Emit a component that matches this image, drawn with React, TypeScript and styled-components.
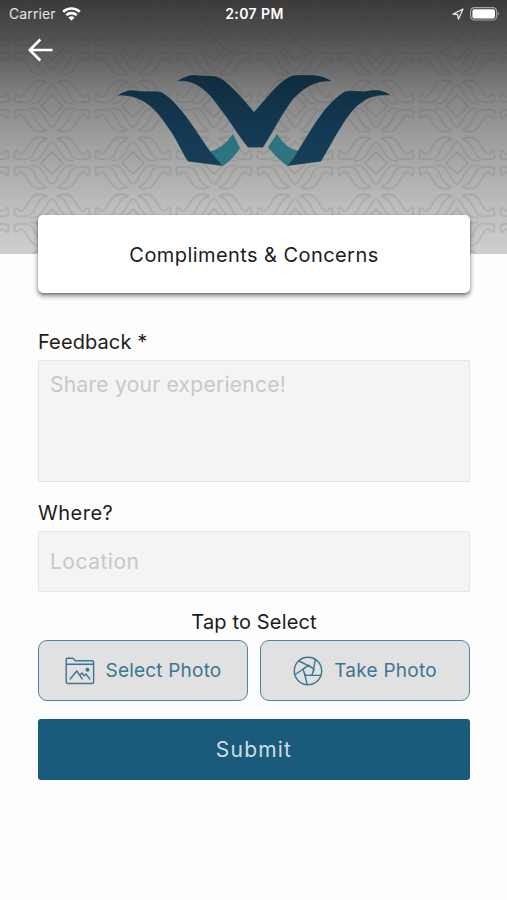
import React from 'react';
import styled, { createGlobalStyle } from 'styled-components';

const GlobalStyle = createGlobalStyle`
  * { box-sizing: border-box; }
  body { margin: 0; background: #fdfdfd; }
  button, input, textarea { font: inherit; }
`;

const Screen = styled.main`
  display: flex;
  flex-direction: column;
  width: 100%;
  height: 900px;
  overflow: hidden;
  background: #fdfdfd;
  color: #1b1b1b;
  font-family: Inter, 'Liberation Sans', sans-serif;
`;

const Header = styled.header`
  position: relative;
  flex: none;
  height: 254px;
  background: linear-gradient(#3b3b3b 0, #4b4b4b 28px, #626262 60px, #858585 98px, #9c9c9c 135px, #acacab 170px, #bfbfbe 210px, #cfcfce 254px);
`;

const HeaderArt = styled.svg`
  position: absolute;
  inset: 0;
  width: 100%;
  height: 100%;
`;

const StatusBar = styled.div`
  position: relative;
  display: grid;
  grid-template-columns: 1fr auto 1fr;
  align-items: center;
  height: 28px;
  padding: 0 7px 0 9px;
  color: #fff;
  font-size: 14px;
  line-height: 28px;
`;

const StatusGroup = styled.div<{ $end?: boolean }>`
  display: flex;
  align-items: center;
  justify-content: ${p => (p.$end ? 'flex-end' : 'flex-start')};
  gap: 6px;
  color: #e4e4e4;
  letter-spacing: 0.12px;
`;

const Clock = styled.time`
  font-weight: 600;
  letter-spacing: 0.4px;
`;

const BackButton = styled.button`
  position: relative;
  display: block;
  margin: 9px 0 0 27px;
  padding: 0;
  border: 0;
  background: none;
  width: 27px;
  height: 26px;
`;

const Label = styled.span<{ $size?: number; $track?: number }>`
  font-size: ${p => p.$size ?? 20}px;
  letter-spacing: ${p => p.$track ?? 0}px;
  line-height: 24px;
  white-space: nowrap;
`;

const TitleCard = styled.h1`
  position: relative;
  flex: none;
  display: flex;
  align-items: center;
  justify-content: center;
  height: 78px;
  margin: -39px 37px 0 38px;
  padding-top: 1px;
  border-radius: 5px;
  background: #fff;
  font-weight: 400;
  box-shadow: 0 3px 5px rgba(0, 0, 0, 0.45), 0 1px 2px rgba(0, 0, 0, 0.25);
`;

const Form = styled.form`
  display: flex;
  flex-direction: column;
  padding: 37px 37px 0 38px;
`;

const Field = styled.label<{ $gap: number }>`
  display: flex;
  flex-direction: column;
  gap: 6px;
  margin-bottom: ${p => p.$gap}px;
`;

const fieldStyle = `
  display: block;
  width: 100%;
  border: 1px solid #e5e5e5;
  border-radius: 1px;
  background: #f5f4f2;
  outline: 0;
  resize: none;
  font-size: 21px;
  line-height: 24px;
  &::placeholder { color: #c7c8ca; opacity: 1; }
`;

const TextArea = styled.textarea`
  ${fieldStyle}
  height: 122px;
  padding: 12px 11px;
  letter-spacing: 0.27px;
`;

const TextInput = styled.input`
  ${fieldStyle}
  height: 61px;
  padding: 0 11px 1px;
  letter-spacing: 0.5px;
`;

const PhotoHeading = styled.div`
  text-align: center;
  height: 24px;
  margin-bottom: 6px;
`;

const PhotoRow = styled.div`
  display: grid;
  grid-template-columns: 1fr 1fr;
  gap: 12px;
`;

const PhotoButton = styled.button`
  display: flex;
  align-items: center;
  justify-content: center;
  gap: 11px;
  height: 61px;
  padding: 0;
  border: 1.5px solid #4d86a1;
  border-radius: 9px;
  background: #e1e1e1;
  color: #3c7593;
`;

const SubmitButton = styled.button`
  height: 61px;
  margin-top: 18px;
  padding: 0;
  border: 0;
  border-radius: 3px;
  background: #1a5b7c;
  color: #cfdde4;
`;

const LEAF =
  'M5-24C8-26 14-26 17-25C22-22 23-18 26-14C28-10 30-9 32-9C34-10 34-13 37-12C38-10 36-9 38-6C37-3 33-4 29-4C24-3 21-5 19-8C16-14 13-22 5-24M0-21C4-20 5-15 7-12C10-8 12-4 15-3L22-2M0-11L11 0';

function HeaderBackdrop() {
  return (
    <HeaderArt viewBox="0 0 507 254" preserveAspectRatio="none">
      <defs>
        <g id="quarter"><path d={LEAF} /></g>
        <pattern id="lattice" width="81" height="57" x="11.5" y="20.5" patternUnits="userSpaceOnUse">
          <g transform="translate(40.5 28.5)" fill="none" stroke="#303030" strokeOpacity=".2" strokeWidth="1.1">
            <use href="#quarter" />
            <use href="#quarter" transform="scale(-1 1)" />
            <use href="#quarter" transform="scale(1 -1)" />
            <use href="#quarter" transform="scale(-1 -1)" />
          </g>
        </pattern>
        <linearGradient id="navy" x1="0" y1="73" x2="0" y2="167" gradientUnits="userSpaceOnUse">
          <stop stopColor="#102b3c" />
          <stop offset=".45" stopColor="#12364e" />
          <stop offset="1" stopColor="#173f5b" />
        </linearGradient>
      </defs>
      <rect width="507" height="254" fill="url(#lattice)" />
      <g fill="#2b7480">
        <path d="M208 152Q223 149 233 134L240 148Q233 159 223 166Z" />
        <path d="M277 134Q286 149 299 151L288 166Q278 160 268 147Z" />
      </g>
      <g fill="url(#navy)" stroke="#a3a8aa" strokeOpacity=".3" strokeWidth=".5">
        <path d="M117 95.5C126 90 131 89.5 140 91C149 92 157 90 163 93C181 105 196 131 210 151L223 166L188 161.5C181 151 176 138 169 129C157 110 143 94 117 95.5Z" />
        <path d="M177 81C187 75 192 74 202 75.5C210 76 215 75 222 79C234 88 245 101 254 112C265 100 276 84 289 77C295 74 300 75.5 308 75C318 74.5 326 77 332 81.5C313 80 299 92 291 102C280 117 272 134 263 147.5H248C237 134 230 121 221 110C208 91 197 80 177 81Z" />
        <path d="M391 95.5C382 89 375 89.5 367 91C359 92 351 89.5 344 92C325 104 312 128 299 149Q294 158 287 166L321 161.5C328 150 335 136 343 124C355 105 367 93 391 95.5Z" />
      </g>
    </HeaderArt>
  );
}

const WifiIcon = () => (
  <svg width="19" height="15" viewBox="0 0 19 15" fill="none" stroke="#fff" strokeWidth="2.6">
    <path d="M1.2 4.8C5.8.4 13.2.4 17.8 4.8" />
    <path d="M4.3 8.1C7.2 5.4 11.8 5.4 14.7 8.1" />
    <path d="M9.5 13.7L6.4 10.5Q9.5 8.1 12.6 10.5Z" fill="#fff" stroke="none" />
  </svg>
);

const LocationIcon = () => (
  <svg width="12" height="12" viewBox="0 0 12 12" fill="none" stroke="#e4e4e4" strokeWidth="1.3" strokeLinejoin="round">
    <path d="M11 1L1 6.2L5.5 6.5L6.5 11Z" />
  </svg>
);

const BatteryIcon = () => (
  <svg width="30" height="14" viewBox="0 0 30 14">
    <rect x=".6" y=".6" width="26" height="12.4" rx="3.8" fill="none" stroke="#a5a5a5" strokeWidth="1.2" />
    <rect x="2.4" y="2.2" width="22.6" height="9.2" rx="2" fill="#fff" />
    <path d="M27.8 4.6Q30 6.8 27.8 9Z" fill="#a5a5a5" />
  </svg>
);

const BackIcon = () => (
  <svg width="27" height="26" viewBox="0 0 27 26" fill="none" stroke="#fff" strokeWidth="2.6">
    <path d="M25.5 13H3M13.3 2.5L2.8 13L13.3 23.5" />
  </svg>
);

const FolderPhotoIcon = () => (
  <svg width="30" height="28" viewBox="0 0 30 28" fill="none" stroke="currentColor" strokeWidth="1.4" strokeLinejoin="round" strokeLinecap="round">
    <path d="M1.2 25V2.7Q1.2 1.2 2.7 1.2H7.8L10.3 3.7H27Q28.6 3.7 28.6 5.3V25Q28.6 26.5 27 26.5H2.7Q1.2 26.5 1.2 25ZM1.2 7.2H28.6M5.2 22L11.8 14L17.2 21.8M14.8 18.2L17 15.9L19.2 18.7L20.8 16.9L24.8 22" />
    <circle cx="22.5" cy="12.7" r="1.3" fill="currentColor" />
  </svg>
);

const ApertureIcon = () => (
  <svg width="30" height="30" viewBox="0 0 30 30" fill="none" stroke="currentColor" strokeWidth="1.4" strokeLinejoin="round">
    <circle cx="15" cy="15" r="13.7" />
    <path d="M15.2 9.2L21 13.2L18.8 19.4H12.2L10 13.2Z" />
    <path d="M17.5 10.8L6 5M20.2 15.5L22.3 3.3M16 19.4H28M11.4 17L14.2 28.7M12.6 11.2L2 18.7" />
  </svg>
);

export default function App() {
  return (
    <Screen>
      <GlobalStyle />
      <Header>
        <HeaderBackdrop />
        <StatusBar>
          <StatusGroup>Carrier <WifiIcon /></StatusGroup>
          <Clock>2:07 PM</Clock>
          <StatusGroup $end><LocationIcon /><BatteryIcon /></StatusGroup>
        </StatusBar>
        <BackButton aria-label="Back"><BackIcon /></BackButton>
      </Header>
      <TitleCard><Label $track={0.43}>Compliments &amp; Concerns</Label></TitleCard>
      <Form>
        <Field $gap={19}>
          <Label $track={0.1}>Feedback *</Label>
          <TextArea placeholder="Share your experience!" />
        </Field>
        <Field $gap={18}>
          <Label $track={0.5}>Where?</Label>
          <TextInput placeholder="Location" />
        </Field>
        <PhotoHeading><Label $track={0.15}>Tap to Select</Label></PhotoHeading>
        <PhotoRow>
          <PhotoButton type="button"><FolderPhotoIcon /><Label $size={19} $track={0.2}>Select Photo</Label></PhotoButton>
          <PhotoButton type="button"><ApertureIcon /><Label $size={19} $track={0.25}>Take Photo</Label></PhotoButton>
        </PhotoRow>
        <SubmitButton type="button"><Label $size={21} $track={1.2}>Submit</Label></SubmitButton>
      </Form>
    </Screen>
  );
}
